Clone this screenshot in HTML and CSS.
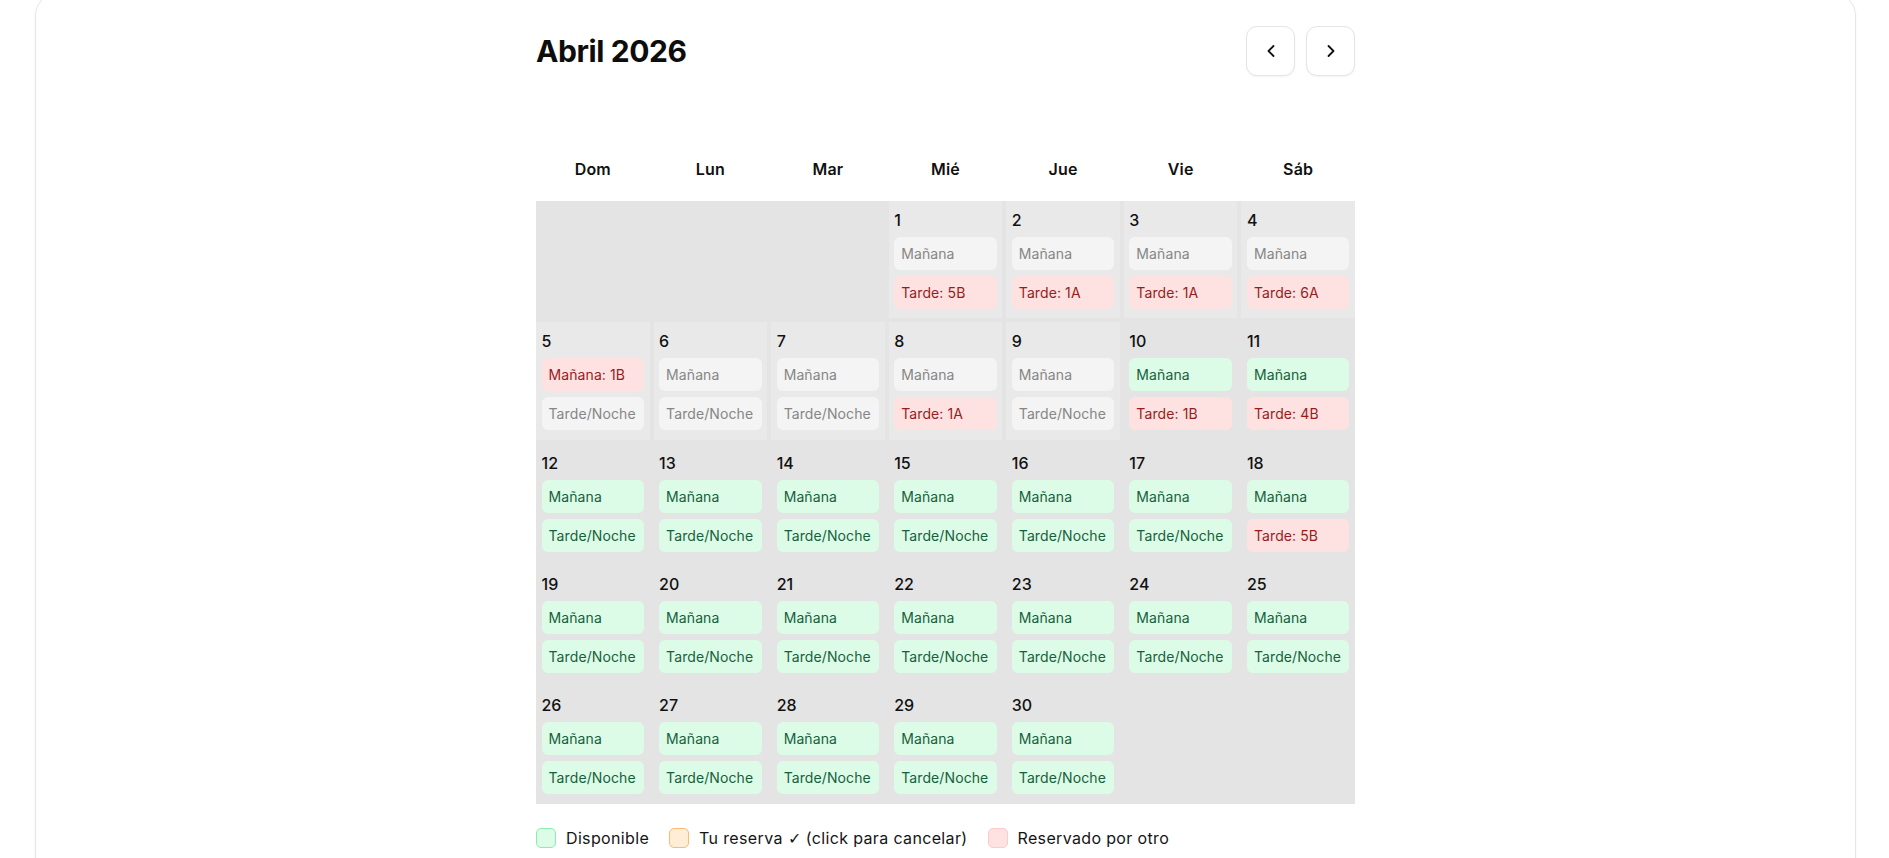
FILE: index.html
```html
<!DOCTYPE html>
<html lang="es">
<head>
<meta charset="utf-8">
<title>Reservas · Abril 2026</title>
<link rel="stylesheet" href="styles.css">
</head>
<body>
<div class="page">
  <section class="card">
    <div class="calendar">
      <header class="cal-head">
        <h1 class="title">Abril 2026</h1>
        <div class="nav">
          <button class="nav-btn" aria-label="Mes anterior">
            <svg viewBox="0 0 24 24" width="20" height="20" fill="none" stroke="currentColor" stroke-width="2.2" stroke-linecap="round" stroke-linejoin="round"><path d="m15 18-6-6 6-6"/></svg>
          </button>
          <button class="nav-btn" aria-label="Mes siguiente">
            <svg viewBox="0 0 24 24" width="20" height="20" fill="none" stroke="currentColor" stroke-width="2.2" stroke-linecap="round" stroke-linejoin="round"><path d="m9 18 6-6-6-6"/></svg>
          </button>
        </div>
      </header>

      <div class="weekdays">
        <div>Dom</div><div>Lun</div><div>Mar</div><div>Mié</div><div>Jue</div><div>Vie</div><div>Sáb</div>
      </div>

      <div class="grid">
        <!-- semana 1 -->
        <div class="cell empty"></div>
        <div class="cell empty"></div>
        <div class="cell empty"></div>
        <div class="cell past"><div class="day">1</div><div class="slot off">Mañana</div><div class="slot taken">Tarde: 5B</div></div>
        <div class="cell past"><div class="day">2</div><div class="slot off">Mañana</div><div class="slot taken">Tarde: 1A</div></div>
        <div class="cell past"><div class="day">3</div><div class="slot off">Mañana</div><div class="slot taken">Tarde: 1A</div></div>
        <div class="cell past"><div class="day">4</div><div class="slot off">Mañana</div><div class="slot taken">Tarde: 6A</div></div>

        <!-- semana 2 -->
        <div class="cell past"><div class="day">5</div><div class="slot taken">Mañana: 1B</div><div class="slot off">Tarde/Noche</div></div>
        <div class="cell past"><div class="day">6</div><div class="slot off">Mañana</div><div class="slot off">Tarde/Noche</div></div>
        <div class="cell past"><div class="day">7</div><div class="slot off">Mañana</div><div class="slot off">Tarde/Noche</div></div>
        <div class="cell past"><div class="day">8</div><div class="slot off">Mañana</div><div class="slot taken">Tarde: 1A</div></div>
        <div class="cell past"><div class="day">9</div><div class="slot off">Mañana</div><div class="slot off">Tarde/Noche</div></div>
        <div class="cell"><div class="day">10</div><div class="slot free">Mañana</div><div class="slot taken">Tarde: 1B</div></div>
        <div class="cell"><div class="day">11</div><div class="slot free">Mañana</div><div class="slot taken">Tarde: 4B</div></div>

        <!-- semana 3 -->
        <div class="cell"><div class="day">12</div><div class="slot free">Mañana</div><div class="slot free">Tarde/Noche</div></div>
        <div class="cell"><div class="day">13</div><div class="slot free">Mañana</div><div class="slot free">Tarde/Noche</div></div>
        <div class="cell"><div class="day">14</div><div class="slot free">Mañana</div><div class="slot free">Tarde/Noche</div></div>
        <div class="cell"><div class="day">15</div><div class="slot free">Mañana</div><div class="slot free">Tarde/Noche</div></div>
        <div class="cell"><div class="day">16</div><div class="slot free">Mañana</div><div class="slot free">Tarde/Noche</div></div>
        <div class="cell"><div class="day">17</div><div class="slot free">Mañana</div><div class="slot free">Tarde/Noche</div></div>
        <div class="cell"><div class="day">18</div><div class="slot free">Mañana</div><div class="slot taken">Tarde: 5B</div></div>

        <!-- semana 4 -->
        <div class="cell"><div class="day">19</div><div class="slot free">Mañana</div><div class="slot free">Tarde/Noche</div></div>
        <div class="cell"><div class="day">20</div><div class="slot free">Mañana</div><div class="slot free">Tarde/Noche</div></div>
        <div class="cell"><div class="day">21</div><div class="slot free">Mañana</div><div class="slot free">Tarde/Noche</div></div>
        <div class="cell"><div class="day">22</div><div class="slot free">Mañana</div><div class="slot free">Tarde/Noche</div></div>
        <div class="cell"><div class="day">23</div><div class="slot free">Mañana</div><div class="slot free">Tarde/Noche</div></div>
        <div class="cell"><div class="day">24</div><div class="slot free">Mañana</div><div class="slot free">Tarde/Noche</div></div>
        <div class="cell"><div class="day">25</div><div class="slot free">Mañana</div><div class="slot free">Tarde/Noche</div></div>

        <!-- semana 5 -->
        <div class="cell"><div class="day">26</div><div class="slot free">Mañana</div><div class="slot free">Tarde/Noche</div></div>
        <div class="cell"><div class="day">27</div><div class="slot free">Mañana</div><div class="slot free">Tarde/Noche</div></div>
        <div class="cell"><div class="day">28</div><div class="slot free">Mañana</div><div class="slot free">Tarde/Noche</div></div>
        <div class="cell"><div class="day">29</div><div class="slot free">Mañana</div><div class="slot free">Tarde/Noche</div></div>
        <div class="cell"><div class="day">30</div><div class="slot free">Mañana</div><div class="slot free">Tarde/Noche</div></div>
        <div class="cell empty"></div>
        <div class="cell empty"></div>
      </div>

      <div class="legend">
        <div class="legend-item"><span class="swatch sw-free"></span><span class="label">Disponible</span></div>
        <div class="legend-item"><span class="swatch sw-mine"></span><span class="label">Tu reserva <span class="check">✓</span> (click para cancelar)</span></div>
        <div class="legend-item"><span class="swatch sw-taken"></span><span class="label">Reservado por otro</span></div>
      </div>
    </div>
  </section>
</div>
</body>
</html>
```

FILE: styles.css
```css
* { box-sizing: border-box; }

body {
  margin: 0;
  background: #ffffff;
  color: #111111;
  font-family: Inter, "Noto Sans", "Liberation Sans", sans-serif;
}

.page {
  padding: 0 33px 0 35px;
}

/* outer card, its top edge sits just above the scroll position */
.card {
  margin-top: -8px;
  border: 1px solid #e6e6e6;
  border-radius: 24px;
  box-shadow: 0 1px 3px rgba(0, 0, 0, 0.05);
  padding: 33px 0 60px;
}

.calendar {
  width: 819px;
  margin: 0 auto;
}

/* month title + navigation */
.cal-head {
  display: flex;
  justify-content: space-between;
  align-items: center;
  height: 50px;
  margin-bottom: 71px;
}

.title {
  margin: 0;
  font-size: 30px;
  font-weight: 700;
  letter-spacing: -0.4px;
  color: #0d0d0d;
}

.nav {
  display: flex;
  gap: 11px;
}

.nav-btn {
  width: 49px;
  height: 50px;
  padding: 0;
  border: 1px solid #e5e5e5;
  border-radius: 11px;
  background: #ffffff;
  color: #111111;
  box-shadow: 0 1px 2px rgba(0, 0, 0, 0.05);
  display: flex;
  align-items: center;
  justify-content: center;
  cursor: pointer;
}

/* weekday labels */
.weekdays {
  display: grid;
  grid-template-columns: repeat(7, 1fr);
  column-gap: 4px;
  height: 44px;
  line-height: 44px;
  margin-bottom: 10px;
  text-align: center;
  font-size: 16px;
  font-weight: 600;
  letter-spacing: 0.2px;
  color: #111111;
}

/* month grid */
.grid {
  display: grid;
  grid-template-columns: repeat(7, 1fr);
  grid-auto-rows: 117.35px;
  gap: 4px;
  background: #e4e4e4;
}

.cell {
  display: flex;
  flex-direction: column;
  padding: 9px 5.5px;
  min-width: 0;
}

.cell.past {
  background: #e9e9e9;
}

.day {
  font-size: 16px;
  line-height: 20px;
  font-weight: 500;
  color: #111111;
  margin-bottom: 7px;
}

.slot {
  height: 33px;
  line-height: 33px;
  padding: 0 7px;
  border-radius: 6px;
  font-size: 14px;
  letter-spacing: 0.1px;
  white-space: nowrap;
  overflow: hidden;
}

.slot + .slot {
  margin-top: 6px;
}

.slot.free {
  background: #dcfce7;
  color: #17603d;
}

.slot.taken {
  background: #fee2e2;
  color: #991b1b;
}

.slot.off {
  background: #f4f4f4;
  color: #868686;
}

/* legend */
.legend {
  display: flex;
  align-items: center;
  gap: 20px;
  margin-top: 24px;
  font-size: 16px;
  letter-spacing: 0.35px;
  color: #151515;
}

.legend-item {
  display: flex;
  align-items: center;
  gap: 10px;
}

.label {
  white-space: nowrap;
}

.check {
  font-family: "DejaVu Sans", sans-serif;
  font-weight: 200;
}

.swatch {
  width: 20px;
  height: 20px;
  border-radius: 5px;
  border: 1px solid;
}

.sw-free {
  background: #dcfce7;
  border-color: #86efac;
}

.sw-mine {
  background: #ffedd5;
  border-color: #fdba74;
}

.sw-taken {
  background: #fee2e2;
  border-color: #fecaca;
}
```
